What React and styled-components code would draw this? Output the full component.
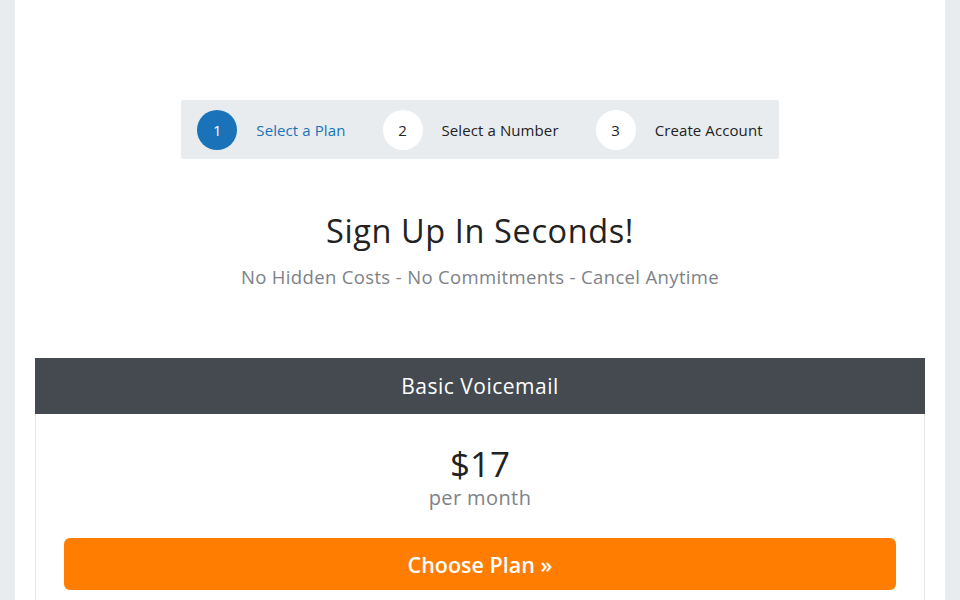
import React from 'react';
import styled, { createGlobalStyle } from 'styled-components';

const GlobalStyle = createGlobalStyle`
    html, body {
        margin: 0;
        padding: 0;
        background: #e9ecef;
        font-family: "Open Sans", "Liberation Sans", sans-serif;
    }
`;

const Page = styled.div`
    margin: 0 15px;
    background: #ffffff;
    min-height: 600px;
    padding-top: 100px;
    box-sizing: border-box;
    display: flex;
    flex-direction: column;
    align-items: center;
`;

const Steps = styled.div`
    display: flex;
    align-items: center;
    height: 59px;
    padding: 0 16px;
    background: #e9ecef;
    border-radius: 2px;
    box-sizing: border-box;
`;

const Step = styled.div`
    display: flex;
    align-items: center;
    margin-right: ${p => (p.$last ? '0' : '37px')};
`;

const Circle = styled.span`
    width: 40px;
    height: 40px;
    border-radius: 50%;
    display: flex;
    align-items: center;
    justify-content: center;
    font-size: 15px;
    background: ${p => (p.$active ? '#1a72b8' : '#ffffff')};
    color: ${p => (p.$active ? '#ffffff' : '#222')};
    margin-right: 19px;
`;

const StepLabel = styled.span`
    font-size: 15px;
    color: ${p => (p.$active ? '#1a72b8' : '#222')};
    letter-spacing: 0.1px;
`;

const Title = styled.h1`
    margin: 52px 0 0;
    font-size: 32.5px;
    font-weight: 400;
    color: #222;
    line-height: 40px;
    letter-spacing: 0.6px;
`;

const Subtitle = styled.p`
    margin: 14px 0 0;
    font-size: 18.5px;
    color: #7d8288;
    line-height: 24px;
    letter-spacing: 0.35px;
`;

const Card = styled.div`
    align-self: stretch;
    margin: 69px 20px 0;
    border: 1px solid #e6e6e6;
    border-top: none;
`;

const CardHeader = styled.div`
    height: 56px;
    background: #454a50;
    color: #ffffff;
    display: flex;
    align-items: center;
    justify-content: center;
    font-size: 21px;
    letter-spacing: 0.5px;
    margin: 0 -1px;
`;

const CardBody = styled.div`
    padding: 28px 28px 24px;
    display: flex;
    flex-direction: column;
    align-items: center;
`;

const Price = styled.div`
    font-size: 35px;
    color: #222;
    line-height: 44px;
`;

const Period = styled.div`
    font-size: 20px;
    color: #7d8288;
    line-height: 24px;
    letter-spacing: 0.4px;
`;

const ChooseButton = styled.button`
    margin-top: 28px;
    align-self: stretch;
    height: 52px;
    border: none;
    border-radius: 6px;
    background: #ff7d00;
    color: #ffffff;
    font-family: inherit;
    font-size: 21.5px;
    font-weight: 600;
    cursor: pointer;
`;

const steps = [
    { n: 1, label: 'Select a Plan', active: true },
    { n: 2, label: 'Select a Number' },
    { n: 3, label: 'Create Account' },
];

export default function App() {
    return (
        <>
            <GlobalStyle />
            <Page>
                <Steps>
                    {steps.map((s, i) => (
                        <Step key={s.n} $last={i === steps.length - 1}>
                            <Circle $active={s.active}>{s.n}</Circle>
                            <StepLabel $active={s.active}>{s.label}</StepLabel>
                        </Step>
                    ))}
                </Steps>
                <Title>Sign Up In Seconds!</Title>
                <Subtitle>No Hidden Costs - No Commitments - Cancel Anytime</Subtitle>
                <Card>
                    <CardHeader>Basic Voicemail</CardHeader>
                    <CardBody>
                        <Price>$17</Price>
                        <Period>per month</Period>
                        <ChooseButton>Choose Plan »</ChooseButton>
                    </CardBody>
                </Card>
            </Page>
        </>
    );
}
